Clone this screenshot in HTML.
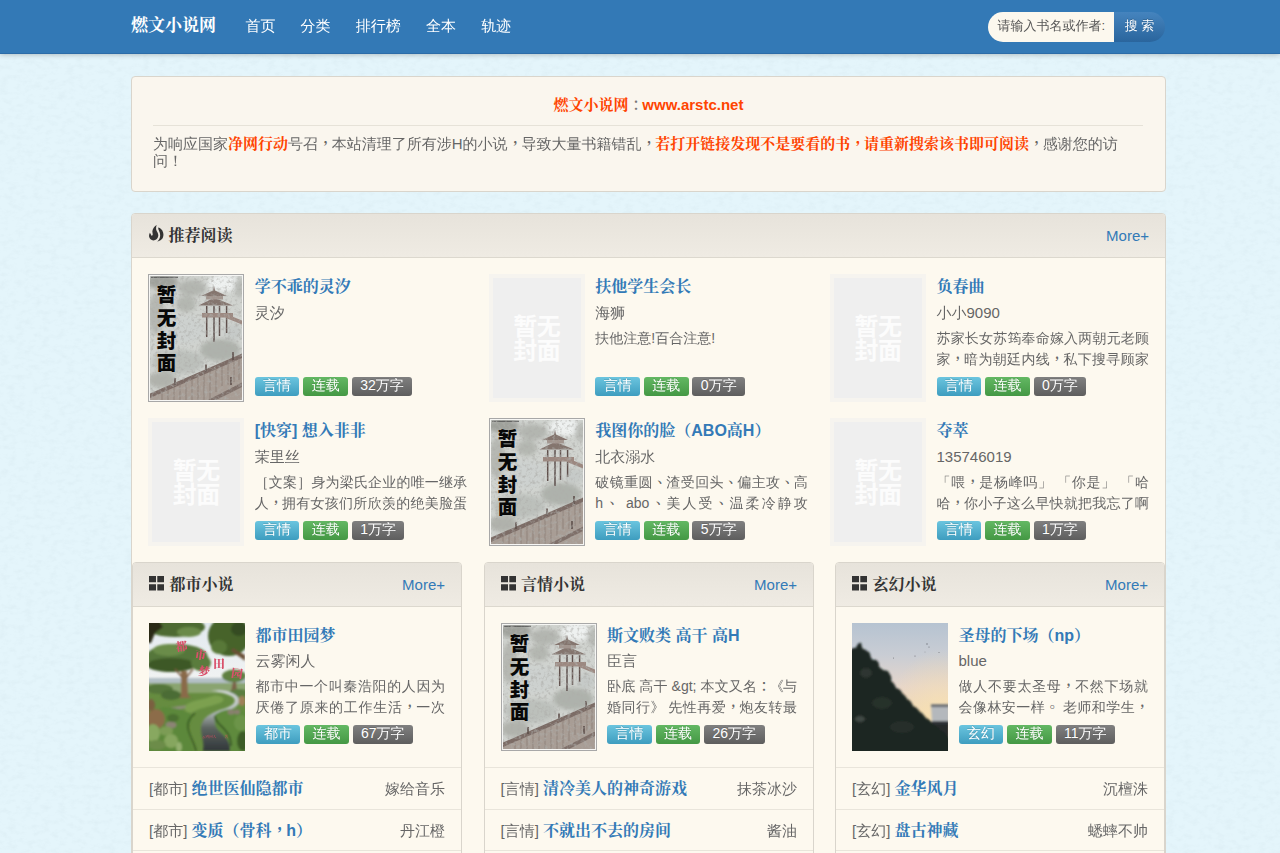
<!DOCTYPE html>
<html lang="zh-CN">
<head>
<meta charset="utf-8">
<title>燃文小说网</title>
<style>
*{box-sizing:border-box}
html,body{margin:0;padding:0}
body{width:1280px;height:853px;overflow:hidden;position:relative;background:#e4f5fb;font-family:"Liberation Sans","WenQuanYi Zen Hei",sans-serif;font-size:15px;line-height:20px;color:#666}
a{color:#337ab7;text-decoration:none}
b,.b{font-family:"Liberation Sans","Noto Serif CJK SC",serif;font-weight:bold}
.nav{position:absolute;left:0;top:0;width:1280px;height:54px;background:#3379b6;border-bottom:1px solid #2c6ca8;box-shadow:0 1px 5px rgba(0,0,0,.22)}
.brand{position:absolute;left:131px;top:16px;font-size:17px;line-height:20px;color:#fff;font-family:"Liberation Sans","Noto Serif CJK SC",serif;font-weight:bold;white-space:nowrap}
.nav ul{position:absolute;left:232.8px;top:16px;margin:0;padding:0;list-style:none;display:flex}
.nav li{font-size:15px;line-height:20px;color:#fff;padding:0 12.6px;white-space:nowrap}
.search{position:absolute;left:988px;top:12px;width:177px;height:30px;border-radius:15px;overflow:hidden;display:flex}
.search .inp{width:126px;height:30px;background:#fcf8ee;font-size:13px;line-height:28px;padding-left:9.5px;color:#555;white-space:nowrap}
.search .btn{width:51px;height:30px;background:linear-gradient(#4584be,#2a659d);color:#fff;font-size:13px;line-height:28px;text-align:center;text-shadow:0 -1px 0 rgba(0,0,0,.2)}
.tex{position:absolute;left:0;top:0;opacity:.13}
.panel{position:absolute;background:#fdf9ef;border:1px solid #d9d5cc;border-radius:4px}
.ph{height:44px;border-bottom:1px solid #dcd8ce;background:linear-gradient(#e7e3db,#efebe3);border-radius:3px 3px 0 0;position:relative}
.ph h3{margin:0;position:absolute;left:36.5px;top:12px;font-size:16px;line-height:20px;font-family:"Liberation Sans","Noto Serif CJK SC",serif;font-weight:bold;color:#333;white-space:nowrap}
.ph .more{position:absolute;right:16px;top:11.5px;font-size:15px;line-height:20px;color:#337ab7}
.ph svg{position:absolute}
#notice{background:#faf6ee}
#notice .t{position:absolute;left:0;top:18px;width:100%;text-align:center;font-size:15px;line-height:20px;color:#777}
#notice .t b{color:#ff4400}
#notice hr{position:absolute;left:21px;top:48px;width:990px;height:1px;border:0;margin:0;background:#e6e2d8}
#notice p{position:absolute;left:21px;top:59px;width:990px;margin:0;font-size:15px;line-height:16.5px;color:#666}
#notice p b{color:#ff4400}
.item{position:absolute;width:319px;height:128px}
.item .cv{position:absolute;left:0;top:0;width:96px;height:128px;overflow:hidden}
.item h4{position:absolute;left:106.5px;top:2px;margin:0;font-size:16px;line-height:22px;font-family:"Liberation Sans","Noto Serif CJK SC",serif;font-weight:bold;color:#337ab7;white-space:nowrap}
.item .au{position:absolute;left:106.5px;top:29px;font-size:15px;line-height:20px;color:#666;white-space:nowrap}
.item .ds{position:absolute;left:106.5px;top:53.5px;right:0;height:42px;overflow:hidden;font-size:14px;line-height:21px;color:#666;text-align:justify;text-align-last:justify;word-break:break-all}
.item .ds.s{text-align-last:left}
.item .tg{position:absolute;left:106.5px;top:102.5px;height:19px;white-space:nowrap;font-size:0}
.tg span{display:inline-block;height:19px;line-height:17.5px;font-size:14px;color:#fff;padding:0 8.4px;border-radius:3px;margin-right:3.8px;vertical-align:top;text-shadow:0 -1px 0 rgba(0,0,0,.15)}
.sub .au{top:27.700px}
.sub .ds{top:53px}
.sub .tg{top:102px}
.t1{background:linear-gradient(#6bc5df,#3e9dbf)}
.t2{background:linear-gradient(#63b863,#449844)}
.t3{background:linear-gradient(#808080,#5e5e5e)}
.nc{width:96px;height:128px;background:#efefef;border:4px solid #f6f4ef;position:relative}
.nc span{position:absolute;left:0;width:88px;text-align:center;color:#fcfcfc;font-family:"Liberation Sans","Noto Sans CJK SC",sans-serif;font-weight:700;font-size:24px;line-height:25px;white-space:nowrap;letter-spacing:-0.5px}
.c{font-family:"Liberation Serif","Noto Serif CJK TC",serif;letter-spacing:-0.083em;font-style:normal;line-height:0;font-weight:600}
b .c,h4 .c{font-weight:bold}
.d{font-style:normal;letter-spacing:-0.083em}
.row{position:absolute;left:0;width:100%;height:41.5px;border-top:1px solid #e9e5db;font-size:15px;line-height:20px;color:#666;white-space:nowrap}
.row .l{position:absolute;left:16px;top:11px}
.row .l b{font-size:16px;color:#337ab7}
.row .r{position:absolute;right:16px;top:11px}
</style>
</head>
<body>
<svg class="tex" width="1280" height="853" viewBox="0 0 1280 853"><defs><filter id="tx" x="0" y="0" width="100%" height="100%"><feTurbulence type="fractalNoise" baseFrequency=".12 .2" numOctaves="3" seed="7"/><feColorMatrix values="0 0 0 0 .35  0 0 0 0 .45  0 0 0 0 .5  0 1.4 0 0 -.62"/></filter></defs><rect width="1280" height="853" filter="url(#tx)"/></svg>
<div class="nav">
  <div class="brand">燃文小说网</div>
  <ul><li>首页</li><li>分类</li><li>排行榜</li><li>全本</li><li>轨迹</li></ul>
  <div class="search"><div class="inp">请输入书名或作者:</div><div class="btn">搜 索</div></div>
</div>
<div class="panel" id="notice" style="left:131px;top:76px;width:1035px;height:116px">
  <div class="t"><b>燃文小说网</b><i class="c" lang="zh-TW">：</i><b>www.arstc.net</b></div>
  <hr>
  <p>为响应国家<b>净网行动</b>号召<i class="c" lang="zh-TW">，</i>本站清理了所有涉H的小说<i class="c" lang="zh-TW">，</i>导致大量书籍错乱<i class="c" lang="zh-TW">，</i><b>若打开链接发现不是要看的书<i class="c" lang="zh-TW">，</i>请重新搜索该书即可阅读</b><i class="c" lang="zh-TW">，</i>感谢您的访问！</p>
</div>
<div class="panel" id="rec" style="left:131px;top:213px;width:1035px;height:700px">
<div class="ph"><svg style="left:16.9px;top:11.2px" width="15" height="17" viewBox="0 0 15 17"><path fill="#333" d="M7.7.1C5.6 1.300 3.700 3.600 3.400 6c-.2 1.600.5 2.600.3 3.800-.1.800-.8 1.100-1.300.6C1.800 9.700 1.500 8.600.9 7.800.2 8.900-.1 10.300.1 11.600.4 13.800 2.200 15.500 4.400 15.500c2.400 0 4.300-1.900 4.800-4.200.4-2.100-.6-3.700-1.500-5.300C6.900 4.400 6.800 2.200 7.700.1zM9.200 2.600c2.300.4 4.200 2.400 4.900 4.800.8 2.600.2 5.400-1.700 7.200-1.100 1.100-2.600 1.800-4.200 1.900 1.600-1.300 2.700-3.100 2.900-5.200.2-1.900-.2-3.300-.8-4.700C9.800 5.400 9.200 4.200 9.200 2.600z"/></svg><h3>推荐阅读</h3><span class="more">More+</span></div>
<div class="item" style="left:16.19999999999999px;top:60px;width:319px"><div class="cv"><svg width="96" height="128" viewBox="0 0 96 128"><defs><filter id="pb1" x="-20%" y="-20%" width="140%" height="140%"><feGaussianBlur stdDeviation="2.2"/></filter><filter id="ps1"><feGaussianBlur stdDeviation="0.5"/></filter><filter id="pn1" x="0" y="0" width="100%" height="100%"><feTurbulence type="fractalNoise" baseFrequency=".3" numOctaves="3" seed="1"/><feColorMatrix values="0 0 0 0 .42  0 0 0 0 .42  0 0 0 0 .4  2 0 0 0 -.95"/></filter><clipPath id="pc1"><rect x="2" y="2" width="92" height="124"/></clipPath></defs>
<rect width="96" height="128" fill="#a8a8a8"/><rect x="1" y="1" width="94" height="126" fill="#f6f6f4"/>
<g clip-path="url(#pc1)"><rect x="2" y="2" width="92" height="124" fill="#d0d3cf"/>
<g filter="url(#pb1)"><ellipse cx="76" cy="9" rx="16" ry="9" fill="#eef1f0"/><ellipse cx="14" cy="8" rx="16" ry="7" fill="#9fa19b"/><ellipse cx="44" cy="14" rx="14" ry="8" fill="#b3b6b0"/><ellipse cx="92" cy="14" rx="6" ry="10" fill="#b9bcb7"/><ellipse cx="38" cy="30" rx="10" ry="8" fill="#b4b7b1"/><ellipse cx="8" cy="40" rx="8" ry="20" fill="#b6b8b2"/><ellipse cx="36" cy="56" rx="22" ry="14" fill="#cdd1cf"/><ellipse cx="72" cy="76" rx="20" ry="11" fill="#aeb2ac"/><ellipse cx="30" cy="88" rx="26" ry="12" fill="#bcc0bb"/><ellipse cx="14" cy="106" rx="14" ry="8" fill="#b0b2ac"/><ellipse cx="86" cy="58" rx="10" ry="8" fill="#c6cac8"/></g>
<g filter="url(#ps1)"><path d="M3 3.300h27" stroke="#4a4a48" stroke-width=".9"/>
<path d="M66 11.500l1 5 12 5.500-26 0 12-5.500zM50.500 31.500l13-6.500h6l15.500 6.500z" fill="#84746e"/><path d="M58 22h17v3.500H58z" fill="#a2958e"/>
<path d="M58.700 32v31M66 32v36M71.500 32v30M78.600 32v27" stroke="#5e504c" stroke-width="1.500"/>
<path d="M54 39h31v4.500H54zM78 40l16 6.500v4L78 44z" fill="#9c8880"/>
<path d="M2 121.500L94 81v46H2z" fill="#a89d95"/><path d="M2 119.500L94 79.500v4.500L2 124z" fill="#7c6c66"/><path d="M60 126l34-17.500v4.500L68 126z" fill="#7f706a"/>
<path d="M14 118v8M26 113v13M38 107v19M50 102v24M62 97v29M74 92v20M86 86v22M20 116v10M32 110v16M44 105v21M56 100v26M68 94v24M80 89v22M91 84v22" stroke="#8c7f78" stroke-width="1.200" opacity=".7"/>
<path d="M27 104v7M58 90.500v7M85 78v8M83 103v8" stroke="#5e504c" stroke-width="1.600"/></g>
<rect x="2" y="2" width="92" height="124" filter="url(#pn1)"/>
<text font-family="'Liberation Sans','Noto Sans CJK SC',sans-serif" font-weight="900" font-size="19.500" fill="#080808" text-anchor="middle"><tspan x="18.500" y="28">暂</tspan><tspan x="18.500" y="51.200">无</tspan><tspan x="18.500" y="73.800">封</tspan><tspan x="18.500" y="96.300">面</tspan></text></g></svg></div><h4>学不乖的灵汐</h4><div class="au">灵汐</div><div class="tg"><span class="t1">言情</span><span class="t2">连载</span><span class="t3">32万字</span></div></div>
<div class="item" style="left:356.8px;top:60px;width:319px"><div class="cv"><div class="nc"><span style="top:35.500px">暂无</span><span style="top:59.500px">封面</span></div></div><h4>扶他学生会长</h4><div class="au">海狮</div><div class="ds s">扶他注意!百合注意!</div><div class="tg"><span class="t1">言情</span><span class="t2">连载</span><span class="t3">0万字</span></div></div>
<div class="item" style="left:698px;top:60px;width:319px"><div class="cv"><div class="nc"><span style="top:35.500px">暂无</span><span style="top:59.500px">封面</span></div></div><h4>负春曲</h4><div class="au">小小9090</div><div class="ds">苏家长女苏筠奉命嫁入两朝元老顾家<i class="c" lang="zh-TW">，</i>暗为朝廷内线<i class="c" lang="zh-TW">，</i>私下搜寻顾家</div><div class="tg"><span class="t1">言情</span><span class="t2">连载</span><span class="t3">0万字</span></div></div>
<div class="item" style="left:16.19999999999999px;top:204px;width:319px"><div class="cv"><div class="nc"><span style="top:35.500px">暂无</span><span style="top:59.500px">封面</span></div></div><h4>[快穿] 想入非非</h4><div class="au">茉里丝</div><div class="ds">［文案］身为梁氏企业的唯一继承人<i class="c" lang="zh-TW">，</i>拥有女孩们所欣羡的绝美脸蛋</div><div class="tg"><span class="t1">言情</span><span class="t2">连载</span><span class="t3">1万字</span></div></div>
<div class="item" style="left:356.8px;top:204px;width:319px"><div class="cv"><svg width="96" height="128" viewBox="0 0 96 128"><defs><filter id="pb2" x="-20%" y="-20%" width="140%" height="140%"><feGaussianBlur stdDeviation="2.2"/></filter><filter id="ps2"><feGaussianBlur stdDeviation="0.5"/></filter><filter id="pn2" x="0" y="0" width="100%" height="100%"><feTurbulence type="fractalNoise" baseFrequency=".3" numOctaves="3" seed="2"/><feColorMatrix values="0 0 0 0 .42  0 0 0 0 .42  0 0 0 0 .4  2 0 0 0 -.95"/></filter><clipPath id="pc2"><rect x="2" y="2" width="92" height="124"/></clipPath></defs>
<rect width="96" height="128" fill="#a8a8a8"/><rect x="1" y="1" width="94" height="126" fill="#f6f6f4"/>
<g clip-path="url(#pc2)"><rect x="2" y="2" width="92" height="124" fill="#d0d3cf"/>
<g filter="url(#pb2)"><ellipse cx="76" cy="9" rx="16" ry="9" fill="#eef1f0"/><ellipse cx="14" cy="8" rx="16" ry="7" fill="#9fa19b"/><ellipse cx="44" cy="14" rx="14" ry="8" fill="#b3b6b0"/><ellipse cx="92" cy="14" rx="6" ry="10" fill="#b9bcb7"/><ellipse cx="38" cy="30" rx="10" ry="8" fill="#b4b7b1"/><ellipse cx="8" cy="40" rx="8" ry="20" fill="#b6b8b2"/><ellipse cx="36" cy="56" rx="22" ry="14" fill="#cdd1cf"/><ellipse cx="72" cy="76" rx="20" ry="11" fill="#aeb2ac"/><ellipse cx="30" cy="88" rx="26" ry="12" fill="#bcc0bb"/><ellipse cx="14" cy="106" rx="14" ry="8" fill="#b0b2ac"/><ellipse cx="86" cy="58" rx="10" ry="8" fill="#c6cac8"/></g>
<g filter="url(#ps2)"><path d="M3 3.300h27" stroke="#4a4a48" stroke-width=".9"/>
<path d="M66 11.500l1 5 12 5.500-26 0 12-5.500zM50.500 31.500l13-6.500h6l15.500 6.500z" fill="#84746e"/><path d="M58 22h17v3.500H58z" fill="#a2958e"/>
<path d="M58.700 32v31M66 32v36M71.500 32v30M78.600 32v27" stroke="#5e504c" stroke-width="1.500"/>
<path d="M54 39h31v4.500H54zM78 40l16 6.500v4L78 44z" fill="#9c8880"/>
<path d="M2 121.500L94 81v46H2z" fill="#a89d95"/><path d="M2 119.500L94 79.500v4.500L2 124z" fill="#7c6c66"/><path d="M60 126l34-17.500v4.500L68 126z" fill="#7f706a"/>
<path d="M14 118v8M26 113v13M38 107v19M50 102v24M62 97v29M74 92v20M86 86v22M20 116v10M32 110v16M44 105v21M56 100v26M68 94v24M80 89v22M91 84v22" stroke="#8c7f78" stroke-width="1.200" opacity=".7"/>
<path d="M27 104v7M58 90.500v7M85 78v8M83 103v8" stroke="#5e504c" stroke-width="1.600"/></g>
<rect x="2" y="2" width="92" height="124" filter="url(#pn2)"/>
<text font-family="'Liberation Sans','Noto Sans CJK SC',sans-serif" font-weight="900" font-size="19.500" fill="#080808" text-anchor="middle"><tspan x="18.500" y="28">暂</tspan><tspan x="18.500" y="51.200">无</tspan><tspan x="18.500" y="73.800">封</tspan><tspan x="18.500" y="96.300">面</tspan></text></g></svg></div><h4>我图你的脸（ABO高H）</h4><div class="au">北衣溺水</div><div class="ds">破镜重圆<i class="c" lang="zh-TW">、</i>渣受回头<i class="c" lang="zh-TW">、</i>偏主攻<i class="c" lang="zh-TW">、</i>高h<i class="c" lang="zh-TW">、</i> abo<i class="c" lang="zh-TW">、</i>美人受<i class="c" lang="zh-TW">、</i>温柔冷静攻</div><div class="tg"><span class="t1">言情</span><span class="t2">连载</span><span class="t3">5万字</span></div></div>
<div class="item" style="left:698px;top:204px;width:319px"><div class="cv"><div class="nc"><span style="top:35.500px">暂无</span><span style="top:59.500px">封面</span></div></div><h4>夺萃</h4><div class="au">135746019</div><div class="ds">「喂<i class="c" lang="zh-TW">，</i>是杨峰吗」 「你是」 「哈哈<i class="c" lang="zh-TW">，</i>你小子这么早快就把我忘了啊</div><div class="tg"><span class="t1">言情</span><span class="t2">连载</span><span class="t3">1万字</span></div></div>
<div class="panel" style="left:0px;top:348px;width:330px;height:400px">
<div class="ph"><svg style="left:16px;top:13px" width="15.300" height="14.500" viewBox="0 0 15.300 14.500"><path fill="#333" d="M0 0h7v6.200H0zM8.300 0h7v6.200h-7zM0 8.300h7v6.200H0zM8.300 8.300h7v6.200h-7z"/></svg><h3>都市小说</h3><span class="more">More+</span></div>
<div class="item sub" style="left:16px;top:60px;width:296px"><div class="cv"><svg width="96" height="128" viewBox="0 0 96 128"><defs><filter id="gb1" x="-20%" y="-20%" width="140%" height="140%"><feGaussianBlur stdDeviation="1.3"/></filter><filter id="gs1"><feGaussianBlur stdDeviation="0.45"/></filter><linearGradient id="gg1" x1="0" y1="0" x2="0" y2="1"><stop offset="0" stop-color="#e2e9ef"/><stop offset="1" stop-color="#f3f4f3"/></linearGradient><linearGradient id="gw1" x1="0" y1="0" x2="0" y2="1"><stop offset="0" stop-color="#d4d9da"/><stop offset=".35" stop-color="#b4bcbc"/><stop offset=".62" stop-color="#5c6460"/><stop offset="1" stop-color="#30363a"/></linearGradient><clipPath id="gc1"><rect width="96" height="128"/></clipPath></defs>
<g clip-path="url(#gc1)"><rect width="96" height="64" fill="url(#gg1)"/><rect y="60" width="96" height="68" fill="#668c40"/>
<g filter="url(#gb1)"><rect x="-4" y="55" width="104" height="6" fill="#b4c0c6"/><rect x="-4" y="60" width="104" height="10" fill="#8aa470"/>
<ellipse cx="26" cy="4" rx="30" ry="10" fill="#4d6a30"/><ellipse cx="40" cy="9" rx="12" ry="5" fill="#6a8a48"/><path d="M-2-2h12l4 6-8 6-4 10h-4z" fill="#2c2c18"/>
<ellipse cx="80" cy="13" rx="21" ry="20" fill="#46642c"/><ellipse cx="70" cy="24" rx="8" ry="7" fill="#587838"/><ellipse cx="90" cy="6" rx="8" ry="7" fill="#344c20"/><path d="M82 28c4 3 8 5 14 10v-6c-5-2-8-5-12-7z" fill="#6a5034"/>
<ellipse cx="28" cy="34" rx="31" ry="13" fill="#54763a"/><ellipse cx="22" cy="42" rx="24" ry="7" fill="#3e5828"/><ellipse cx="52" cy="40" rx="10" ry="8" fill="#5a7c3c"/><ellipse cx="20" cy="27" rx="16" ry="6" fill="#6a8c48"/>
<ellipse cx="85" cy="53" rx="12" ry="6.500" fill="#5e8040"/>
<path d="M32 48l6 0 1 24 3 3-13 0 3-4z" fill="#8a6a4a"/><path d="M26 46l7 8M44 46l-7 9" stroke="#7a5c40" stroke-width="1.600"/><path d="M84 59l3 0 1 9-6 0z" fill="#7a6048"/>
<ellipse cx="10" cy="66" rx="14" ry="5" fill="#55763a"/><ellipse cx="22" cy="72" rx="10" ry="5" fill="#4c6c34"/><ellipse cx="90" cy="70" rx="10" ry="4" fill="#5c7e40"/>
<path d="M19 86c6-3 14-3 20-4 8-1 16-4 24-7l1 2c-8 4-16 6-24 8-7 1-14 1-20 3z" fill="#8e8e7c"/>
<path d="M62 68c6 0 14 2 20 5 4 2 5 5 2 8-4 4-12 5-18 8-5 2-10 5-12 9-3 5-2 10-1 15 1 5 2 10 1 15h27c0-6-1-11-4-15-3-5-9-8-10-14-1-5 4-8 10-11 6-2 12-4 13-9 1-6-6-9-13-11-5-1-10-1-15 0z" fill="url(#gw1)"/>
<path d="M40 80c6-3 16-4 24-7 4-1 8 0 10 2 2 3-2 5-6 6-8 3-18 4-24 8-3 2-8 0-8-3 0-3 1-5 4-6z" fill="#7ca050"/>
<path d="M66 92c4-4 12-6 18-6 6 0 12 2 14 6v38H82c0-6-2-12-6-16-4-5-10-8-10-14 0-3-2-6 0-8z" fill="#5e8a3c"/><path d="M66 93c0 6 6 9 10 14 4 4 6 10 6 16" stroke="#2e4820" stroke-width="1.500" fill="none"/>
<path d="M14 84c8 0 18 2 26 6 3 2 4 5 2 8-4 5-3 12-1 18 1 5 3 9 4 14H-2V92z" fill="#5c883a"/><path d="M46 90c-5 4-8 9-7 15 1 8 6 14 8 23" stroke="#30501e" stroke-width="1.400" fill="none"/>
<ellipse cx="7" cy="96" rx="9" ry="10" fill="#8c6c48"/><ellipse cx="2" cy="82" rx="4" ry="6" fill="#7a6040"/><ellipse cx="22" cy="102" rx="5.500" ry="3.500" fill="#8c8474"/><ellipse cx="24" cy="95" rx="6" ry="4" fill="#4c7030"/>
<ellipse cx="4" cy="110" rx="7" ry="9" fill="#88a860"/><ellipse cx="17" cy="108" rx="7" ry="4.500" fill="#7c9c54"/><ellipse cx="22" cy="118" rx="7" ry="7" fill="#86a65e"/><ellipse cx="8" cy="122" rx="9" ry="5" fill="#6c8c48"/><ellipse cx="30" cy="124" rx="3" ry="5" fill="#94b070"/>
<ellipse cx="82" cy="89" rx="3.500" ry="2.600" fill="#8a8070"/><ellipse cx="88" cy="89" rx="3" ry="2.400" fill="#8a8070"/><ellipse cx="93" cy="78" rx="3.500" ry="5" fill="#a08058"/><ellipse cx="92" cy="100" rx="7" ry="8" fill="#6c9448"/><ellipse cx="94" cy="118" rx="6" ry="10" fill="#3c5c28"/></g>
<g filter="url(#gs1)" font-family="'Liberation Serif','Noto Serif CJK SC',serif" font-weight="900" font-size="11.500" fill="#d9506a" text-anchor="middle"><text x="32.500" y="27.500" transform="rotate(-8 32.500 23)">都</text><text x="51.500" y="36" transform="rotate(8 51.500 31.500)">市</text><text x="70" y="44.500">田</text><text x="88" y="54.500" transform="rotate(8 88 50)">园</text><text x="55" y="52.500" transform="rotate(8 55 48)">梦</text></g>
<text x="53" y="115" font-family="'Liberation Serif','Noto Serif CJK SC',serif" font-weight="bold" font-size="3.600" fill="#d24a5c" opacity=".75" filter="url(#gs1)">云雾闲人 　　著</text></g></svg></div><h4>都市田园梦</h4><div class="au">云雾闲人</div><div class="ds">都市中一个叫秦浩阳的人因为厌倦了原来的工作生活<i class="c" lang="zh-TW">，</i>一次</div><div class="tg"><span class="t1">都市</span><span class="t2">连载</span><span class="t3">67万字</span></div></div>
<div class="row" style="top:204.0px"><span class="l">[都市] <b>绝世医仙隐都市</b></span><span class="r">嫁给音乐</span></div>
<div class="row" style="top:245.5px"><span class="l">[都市] <b>变质（骨科<i class="c" lang="zh-TW">，</i>h）</b></span><span class="r">丹江橙</span></div>
<div class="row" style="top:287.0px"></div>
</div>
<div class="panel" style="left:351.5px;top:348px;width:330.5px;height:400px">
<div class="ph"><svg style="left:16px;top:13px" width="15.300" height="14.500" viewBox="0 0 15.300 14.500"><path fill="#333" d="M0 0h7v6.200H0zM8.300 0h7v6.200h-7zM0 8.300h7v6.200H0zM8.300 8.300h7v6.200h-7z"/></svg><h3>言情小说</h3><span class="more">More+</span></div>
<div class="item sub" style="left:16px;top:60px;width:296.5px"><div class="cv"><svg width="96" height="128" viewBox="0 0 96 128"><defs><filter id="pb3" x="-20%" y="-20%" width="140%" height="140%"><feGaussianBlur stdDeviation="2.2"/></filter><filter id="ps3"><feGaussianBlur stdDeviation="0.5"/></filter><filter id="pn3" x="0" y="0" width="100%" height="100%"><feTurbulence type="fractalNoise" baseFrequency=".3" numOctaves="3" seed="3"/><feColorMatrix values="0 0 0 0 .42  0 0 0 0 .42  0 0 0 0 .4  2 0 0 0 -.95"/></filter><clipPath id="pc3"><rect x="2" y="2" width="92" height="124"/></clipPath></defs>
<rect width="96" height="128" fill="#a8a8a8"/><rect x="1" y="1" width="94" height="126" fill="#f6f6f4"/>
<g clip-path="url(#pc3)"><rect x="2" y="2" width="92" height="124" fill="#d0d3cf"/>
<g filter="url(#pb3)"><ellipse cx="76" cy="9" rx="16" ry="9" fill="#eef1f0"/><ellipse cx="14" cy="8" rx="16" ry="7" fill="#9fa19b"/><ellipse cx="44" cy="14" rx="14" ry="8" fill="#b3b6b0"/><ellipse cx="92" cy="14" rx="6" ry="10" fill="#b9bcb7"/><ellipse cx="38" cy="30" rx="10" ry="8" fill="#b4b7b1"/><ellipse cx="8" cy="40" rx="8" ry="20" fill="#b6b8b2"/><ellipse cx="36" cy="56" rx="22" ry="14" fill="#cdd1cf"/><ellipse cx="72" cy="76" rx="20" ry="11" fill="#aeb2ac"/><ellipse cx="30" cy="88" rx="26" ry="12" fill="#bcc0bb"/><ellipse cx="14" cy="106" rx="14" ry="8" fill="#b0b2ac"/><ellipse cx="86" cy="58" rx="10" ry="8" fill="#c6cac8"/></g>
<g filter="url(#ps3)"><path d="M3 3.300h27" stroke="#4a4a48" stroke-width=".9"/>
<path d="M66 11.500l1 5 12 5.500-26 0 12-5.500zM50.500 31.500l13-6.500h6l15.500 6.500z" fill="#84746e"/><path d="M58 22h17v3.500H58z" fill="#a2958e"/>
<path d="M58.700 32v31M66 32v36M71.500 32v30M78.600 32v27" stroke="#5e504c" stroke-width="1.500"/>
<path d="M54 39h31v4.500H54zM78 40l16 6.500v4L78 44z" fill="#9c8880"/>
<path d="M2 121.500L94 81v46H2z" fill="#a89d95"/><path d="M2 119.500L94 79.500v4.500L2 124z" fill="#7c6c66"/><path d="M60 126l34-17.500v4.500L68 126z" fill="#7f706a"/>
<path d="M14 118v8M26 113v13M38 107v19M50 102v24M62 97v29M74 92v20M86 86v22M20 116v10M32 110v16M44 105v21M56 100v26M68 94v24M80 89v22M91 84v22" stroke="#8c7f78" stroke-width="1.200" opacity=".7"/>
<path d="M27 104v7M58 90.500v7M85 78v8M83 103v8" stroke="#5e504c" stroke-width="1.600"/></g>
<rect x="2" y="2" width="92" height="124" filter="url(#pn3)"/>
<text font-family="'Liberation Sans','Noto Sans CJK SC',sans-serif" font-weight="900" font-size="19.500" fill="#080808" text-anchor="middle"><tspan x="18.500" y="28">暂</tspan><tspan x="18.500" y="51.200">无</tspan><tspan x="18.500" y="73.800">封</tspan><tspan x="18.500" y="96.300">面</tspan></text></g></svg></div><h4>斯文败类 高干 高H</h4><div class="au">臣言</div><div class="ds">卧底 高干 &amp;gt; 本文又名<i class="c" lang="zh-TW">：</i><i class="d">《</i>与婚同行<i class="d">》</i> 先性再爱<i class="c" lang="zh-TW">，</i>炮友转最</div><div class="tg"><span class="t1">言情</span><span class="t2">连载</span><span class="t3">26万字</span></div></div>
<div class="row" style="top:204.0px"><span class="l">[言情] <b>清冷美人的神奇游戏</b></span><span class="r">抹茶冰沙</span></div>
<div class="row" style="top:245.5px"><span class="l">[言情] <b>不就出不去的房间</b></span><span class="r">酱油</span></div>
<div class="row" style="top:287.0px"></div>
</div>
<div class="panel" style="left:703px;top:348px;width:330px;height:400px">
<div class="ph"><svg style="left:16px;top:13px" width="15.300" height="14.500" viewBox="0 0 15.300 14.500"><path fill="#333" d="M0 0h7v6.200H0zM8.300 0h7v6.200h-7zM0 8.300h7v6.200H0zM8.300 8.300h7v6.200h-7z"/></svg><h3>玄幻小说</h3><span class="more">More+</span></div>
<div class="item sub" style="left:16px;top:60px;width:296px"><div class="cv"><svg width="96" height="128" viewBox="0 0 96 128"><defs><filter id="sb1" x="-10%" y="-10%" width="120%" height="120%"><feGaussianBlur stdDeviation="0.900"/></filter><linearGradient id="sg1" x1="0" y1="0" x2="0" y2="1"><stop offset="0" stop-color="#b6c3d1"/><stop offset=".25" stop-color="#c9cdd4"/><stop offset=".5" stop-color="#e6d6cb"/><stop offset=".75" stop-color="#f4dcb4"/><stop offset="1" stop-color="#f7e2b0"/></linearGradient><radialGradient id="sh1" cx=".95" cy=".8" r=".6"><stop offset="0" stop-color="#fae4b0" stop-opacity=".9"/><stop offset="1" stop-color="#f6dcb0" stop-opacity="0"/></radialGradient><clipPath id="sc1"><rect width="96" height="128"/></clipPath></defs>
<g clip-path="url(#sc1)"><rect width="96" height="128" fill="url(#sg1)"/><rect width="96" height="128" fill="url(#sh1)"/>
<g filter="url(#sb1)"><path d="M79 81.500h18v19H80z" fill="#b4b8bc"/><path d="M79 81.500h18v2.500H79z" fill="#5a6068"/><path d="M80 98h17v3H80z" fill="#30343a"/><path d="M81 101h16v16l-16-12z" fill="#25292c"/>
<path d="M-2 27c2-1 4-3 6-2 1-3 3-6 5-5 1 2 0 4 2 6 3 0 4 3 6 3 2 3 1 6 4 8 3-1 5 1 6 4-1 3 2 4 4 6 3 1 5 0 6 3 2 3 3 5 2 8 3 2 4 4 5 7 3 1 5 2 6 5 2 2 4 3 5 6 3 1 5 4 6 7 3 1 5 3 7 6 3 1 4 4 6 6 3 1 5 3 7 6 3 2 5 3 7 6 3 1 5 3 6 5l5 4V130H-2z" fill="#1d2521"/>
<ellipse cx="14" cy="50" rx="6" ry="5" fill="#38423a" opacity=".6"/><ellipse cx="30" cy="80" rx="10" ry="6" fill="#2e3832" opacity=".6"/><ellipse cx="8" cy="96" rx="5" ry="3" fill="#5a645e" opacity=".6"/><ellipse cx="50" cy="104" rx="12" ry="6" fill="#2c3630" opacity=".6"/></g>
<g fill="#4a4a50" opacity=".7"><circle cx="75" cy="21" r=".7"/><circle cx="77" cy="24" r=".6"/><circle cx="63" cy="33" r=".6"/><circle cx="41.500" cy="35" r=".5"/><circle cx="87" cy="29.500" r=".5"/><circle cx="73" cy="29" r=".4"/></g></g></svg></div><h4>圣母的下场（np）</h4><div class="au">blue</div><div class="ds">做人不要太圣母<i class="c" lang="zh-TW">，</i>不然下场就会像林安一样<i class="c" lang="zh-TW">。</i> 老师和学生<i class="c" lang="zh-TW">，</i></div><div class="tg"><span class="t1">玄幻</span><span class="t2">连载</span><span class="t3">11万字</span></div></div>
<div class="row" style="top:204.0px"><span class="l">[玄幻] <b>金华风月</b></span><span class="r">沉檀洙</span></div>
<div class="row" style="top:245.5px"><span class="l">[玄幻] <b>盘古神藏</b></span><span class="r">蟋蟀不帅</span></div>
<div class="row" style="top:287.0px"></div>
</div>
</div>
</body>
</html>
